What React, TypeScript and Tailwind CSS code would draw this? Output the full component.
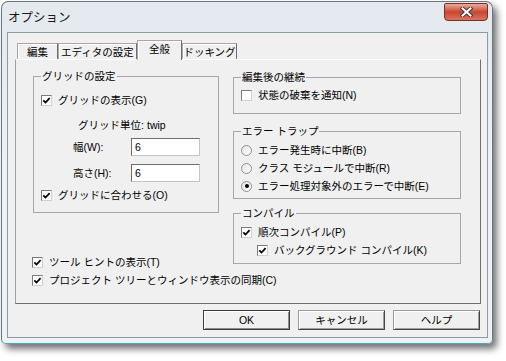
import React from "react";

const font = "font-['Liberation_Sans','Noto_Sans_CJK_JP',sans-serif]";

function Check({ checked }: { checked?: boolean }) {
  return (
    <span className="flex h-[11px] w-[11px] shrink-0 items-center justify-center border border-t-[#7a7a7a] border-l-[#7a7a7a] border-r-[#cfcfcf] border-b-[#cfcfcf] bg-white">
      {checked && (
        <svg width="9" height="9" viewBox="0 0 9 9">
          <path d="M1.3 4.3 L3.5 6.6 L7.6 2.2" fill="none" stroke="#000" strokeWidth="1.7" />
        </svg>
      )}
    </span>
  );
}

function Radio({ checked }: { checked?: boolean }) {
  return (
    <span className="flex h-[11px] w-[11px] shrink-0 items-center justify-center rounded-full border border-[#8f8f8f] bg-gradient-to-br from-[#e4e4e4] to-white">
      {checked && <span className="h-[4px] w-[4px] rounded-full bg-black" />}
    </span>
  );
}

function Row({ children, className = "" }: { children: React.ReactNode; className?: string }) {
  return <div className={`flex h-[18px] items-center gap-[6px] whitespace-nowrap ${className}`}>{children}</div>;
}

function Group({ title, className = "", children }: { title: string; className?: string; children: React.ReactNode }) {
  return (
    <fieldset className={`border border-[#a6a6a6] pl-[7px] ${className}`}>
      <legend className="px-[1px] leading-[14px]">{title}</legend>
      {children}
    </fieldset>
  );
}

function Field({ value }: { value: string }) {
  return (
    <div className="flex h-[18px] w-[69px] items-center border border-[#c4c4c4] border-t-[#6e6e6e] border-l-[#6e6e6e] bg-white pl-[3px]">
      {value}
    </div>
  );
}

function Tab({ label, width, active }: { label: string; width: string; active?: boolean }) {
  if (active) {
    return (
      <div className={`relative z-10 -mb-px flex h-[20px] ${width} justify-center whitespace-nowrap border border-b-0 border-[#a7a7a7] border-r-[#6d6d6d] bg-[#f0f0f0] pt-[1px] shadow-[inset_1px_1px_0_#fff]`}>
        {label}
      </div>
    );
  }
  return (
    <div className={`flex h-[16px] ${width} items-center justify-center whitespace-nowrap border border-b-0 border-[#a7a7a7] border-r-[#6d6d6d] bg-[#f0f0f0] shadow-[inset_1px_1px_0_#fff]`}>
      {label}
    </div>
  );
}

function Button({ label, primary }: { label: string; primary?: boolean }) {
  const edge = primary
    ? "border-[#3c3c3c] shadow-[inset_1px_1px_0_#fff,inset_-1px_-1px_0_#8a8a8a]"
    : "border-[#9a9a9a] border-b-[#444] border-r-[#444] shadow-[inset_1px_1px_0_#fff,inset_-1px_-1px_0_#a0a0a0]";
  return (
    <div className={`flex h-[20px] w-[87px] items-center justify-center border bg-[#f0f0f0] ${edge}`}>{label}</div>
  );
}

export default function App() {
  return (
    <div className={`h-[361px] w-[506px] overflow-hidden bg-white pl-px pt-px text-[10.5px] leading-[14px] text-black ${font}`}>
      <div className="flex h-[343px] w-[492px] flex-col rounded-t-[7px] rounded-b-[5px] border border-[#6a7680] border-b-[#4aa6c8] bg-gradient-to-b from-[#e3e9ee] via-[#eef2f6] to-[#eef2f5] shadow-[4px_5px_7px_rgba(0,0,0,0.55)]">
        <div className="flex h-[30px] items-start justify-between pl-[6px] pr-[4px]">
          <span className="mt-[8px] text-[12.5px] leading-[16px] text-[#1a1a1a]">オプション</span>
          <div className="mt-px flex h-[18px] w-[44px] items-center justify-center rounded-b-[4px] rounded-t-[2px] border border-[#7a2f24] bg-gradient-to-b from-[#e9ab9c] via-[#c8452f] to-[#d9735f]">
            <svg width="13" height="10" viewBox="0 0 13 10">
              <path d="M2.5 1.5 L10.5 8.5 M10.5 1.5 L2.5 8.5" stroke="#3a3a3a" strokeWidth="4" strokeLinecap="square" />
              <path d="M2.5 1.5 L10.5 8.5 M10.5 1.5 L2.5 8.5" stroke="#fff" strokeWidth="2" strokeLinecap="square" />
            </svg>
          </div>
        </div>

        <div className="ml-[5px] flex h-[306px] w-[481px] flex-col border border-[#8e9aa4] bg-[#f0f0f0] pl-[7px] pr-[6px] pt-[7px]">
          <div className="flex h-[19px] items-end pl-[2px]">
            <Tab label="編集" width="w-[41px]" />
            <Tab label="エディタの設定" width="w-[79px]" />
            <Tab label="全般" width="w-[45px]" active />
            <Tab label="ドッキング" width="w-[55px]" />
          </div>

          <div className="flex h-[245px] border border-[#a0a0a0] border-t-white border-b-[#6d6d6d] border-r-[#6d6d6d] pl-[17px] pt-[9px]">
            <div className="flex w-[186px] flex-col">
              <Group title="グリッドの設定" className="w-[186px] pb-[8px] pt-[8px]">
                <Row>
                  <Check checked />
                  グリッドの表示(G)
                </Row>
                <div className="mt-[8px] flex h-[16px] items-center whitespace-nowrap pl-[37px]">
                  <span className="w-[69px]">グリッド単位:</span>
                  <span>twip</span>
                </div>
                <div className="mt-[5px] flex items-center pl-[32px]">
                  <span className="w-[58px]">幅(W):</span>
                  <Field value="6" />
                </div>
                <div className="mt-[8px] flex items-center pl-[32px]">
                  <span className="w-[58px]">高さ(H):</span>
                  <Field value="6" />
                </div>
                <Row className="mt-[4px]">
                  <Check checked />
                  グリッドに合わせる(O)
                </Row>
              </Group>
              <Row className="-ml-px mt-[40px]">
                <Check checked />
                ツール ヒントの表示(T)
              </Row>
              <Row className="-ml-px">
                <Check checked />
                プロジェクト ツリーとウィンドウ表示の同期(C)
              </Row>
            </div>

            <div className="ml-[14px] flex w-[228px] flex-col pt-px">
              <Group title="編集後の継続" className="pb-[9px] pt-[2px]">
                <Row>
                  <Check />
                  状態の破棄を通知(N)
                </Row>
              </Group>
              <Group title="エラー トラップ" className="mt-[10px] pb-[3px] pt-[3px]">
                <Row>
                  <Radio />
                  エラー発生時に中断(B)
                </Row>
                <Row>
                  <Radio />
                  クラス モジュールで中断(R)
                </Row>
                <Row>
                  <Radio checked />
                  エラー処理対象外のエラーで中断(E)
                </Row>
              </Group>
              <Group title="コンパイル" className="mt-[7px] pb-[4px] pt-[3px]">
                <Row>
                  <Check checked />
                  順次コンパイル(P)
                </Row>
                <Row className="pl-[16px]">
                  <Check checked />
                  バックグラウンド コンパイル(K)
                </Row>
              </Group>
            </div>
          </div>

          <div className="mt-[6px] flex justify-end gap-[8px] pr-px">
            <Button label="OK" primary />
            <Button label="キャンセル" />
            <Button label="ヘルプ" />
          </div>
        </div>
      </div>
    </div>
  );
}
